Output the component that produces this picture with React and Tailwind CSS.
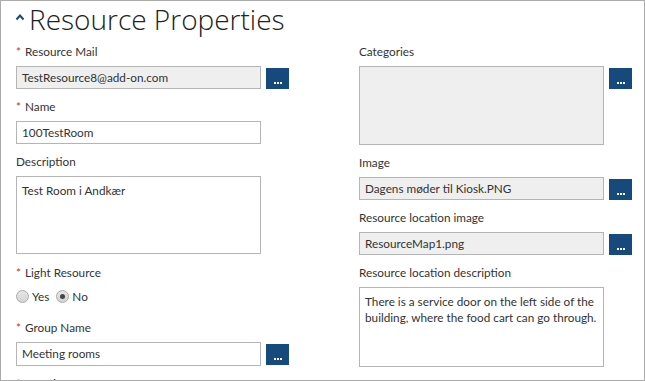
import React from 'react';

const font = { fontFamily: 'Lato, "Open Sans", "Liberation Sans", sans-serif' };

const Label = ({ children, required }) => (
  <div className="h-4 leading-4 text-[11.75px] text-[#333] mb-[6px] whitespace-nowrap">
    {required && <span className="text-[#c0392b] mr-1">*</span>}
    {children}
  </div>
);

const DotsButton = () => (
  <button className="ml-[5px] w-[23px] h-[21px] bg-[#174a7c] flex items-end justify-center pb-[5px] gap-[1px]">
    <span className="w-[2px] h-[2px] bg-white" />
    <span className="w-[2px] h-[2px] bg-white" />
    <span className="w-[2px] h-[2px] bg-white" />
  </button>
);

const Field = ({ label, required, value, gray, height = 23, button, multiline, extra = 0 }) => (
  <div style={{ marginBottom: 10 + extra }}>
    <Label required={required}>{label}</Label>
    <div className="flex items-start">
      <div
        className={`w-[245px] border border-[#b5b5b5] px-[5px] text-[11.75px] text-[#333] ${gray ? 'bg-[#efefef]' : 'bg-white'} ${multiline ? 'pt-[6px] leading-[16px]' : 'leading-[21px]'}`}
        style={{ height }}
      >
        {value}
      </div>
      {button && <div className="mt-[2px]"><DotsButton /></div>}
    </div>
  </div>
);

const Radio = ({ checked, label }) => (
  <label className="flex items-center mr-[7px]">
    <span className="w-[13px] h-[13px] rounded-full border border-[#a9a9a9] bg-gradient-to-b from-[#e6e6e6] to-[#d4d4d4] flex items-center justify-center">
      {checked && <span className="w-[5px] h-[5px] rounded-full bg-[#444]" />}
    </span>
    <span className="ml-[3px] text-[11.75px] text-[#333]">{label}</span>
  </label>
);

export default function App() {
  return (
    <div className="w-[645px] h-[381px] overflow-hidden bg-white border border-[#ababab]" style={font}>
      <div className="flex items-center h-[35px] pl-[14px] pt-[1px]">
        <svg width="10" height="8" viewBox="0 0 10 8" className="mt-[-4px]">
          <path d="M1.5 6.5 L5 2.5 L8.5 6.5" fill="none" stroke="#174a7c" strokeWidth="2" />
        </svg>
        <h1
          className="ml-[4px] text-[28px] font-light text-[#222] leading-none"
          style={{ fontFamily: '"Open Sans", Lato, sans-serif' }}
        >
          Resource Properties
        </h1>
      </div>
      <div className="flex pt-[8px]">
        <div className="w-[358px] pl-[15px]">
          <Field label="Resource Mail" required value="TestResource8@add-on.com" gray button />
          <Field label="Name" required value="100TestRoom" height={23} />
          <Field label="Description" value="Test Room i Andkær" height={78} multiline extra={1} />
          <div className="mb-[10px]">
            <Label required>Light Resource</Label>
            <div className="flex items-center h-[19px] mb-[14px]">
              <Radio label="Yes" />
              <Radio label="No" checked />
            </div>
          </div>
          <Field label="Group Name" required value="Meeting rooms" height={24} button />
          <Label required>Location</Label>
        </div>
        <div className="flex-1">
          <Field label="Categories" gray height={79} button />
          <Field label="Image" value="Dagens møder til Kiosk.PNG" gray button />
          <Field label="Resource location image" value="ResourceMap1.png" gray button />
          <Field
            label="Resource location description"
            value="There is a service door on the left side of the building, where the food cart can go through."
            height={80}
            multiline
          />
          <Label>Show Map</Label>
        </div>
      </div>
    </div>
  );
}
